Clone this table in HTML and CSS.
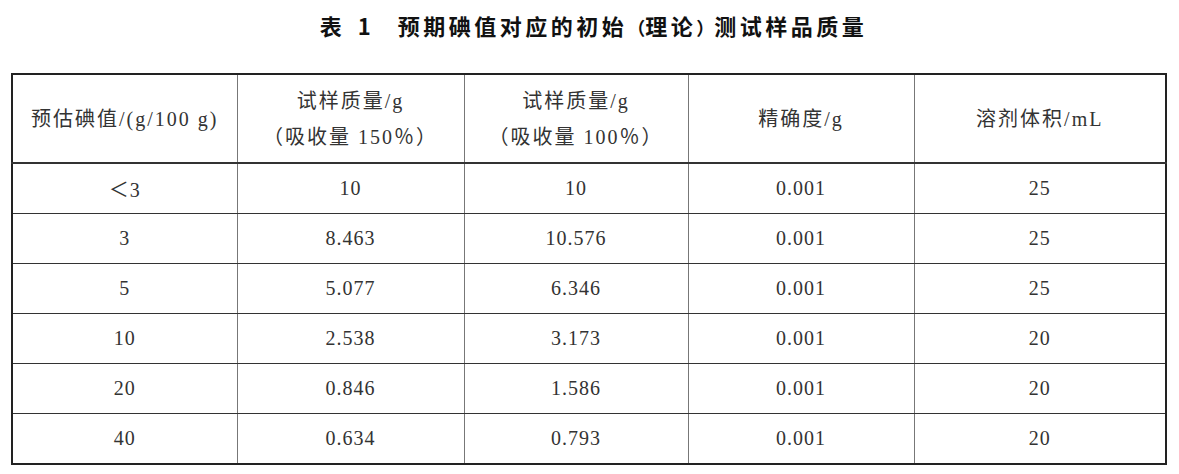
FILE: index.html
```html
<!DOCTYPE html>
<html lang="zh">
<head>
<meta charset="utf-8">
<link rel="stylesheet" href="styles.css">
</head>
<body>
<div class="page">
  <h1 class="title"><span class="tb">表</span><span class="tn">1</span><span class="tt">预期碘值对应的初始<span class="par">（</span>理论<span class="par">）</span>测试样品质量</span></h1>
  <table class="data">
    <colgroup>
      <col class="c1"><col class="c2"><col class="c3"><col class="c4"><col class="c5">
    </colgroup>
    <thead>
      <tr class="head">
        <th>预估碘值/(g/100 g)</th>
        <th>试样质量/g<br>（吸收量 150％）</th>
        <th>试样质量/g<br>（吸收量 100％）</th>
        <th>精确度/g</th>
        <th>溶剂体积/mL</th>
      </tr>
    </thead>
    <tbody>
      <tr><td>＜3</td><td>10</td><td>10</td><td>0.001</td><td>25</td></tr>
      <tr><td>3</td><td>8.463</td><td>10.576</td><td>0.001</td><td>25</td></tr>
      <tr><td>5</td><td>5.077</td><td>6.346</td><td>0.001</td><td>25</td></tr>
      <tr><td>10</td><td>2.538</td><td>3.173</td><td>0.001</td><td>20</td></tr>
      <tr><td>20</td><td>0.846</td><td>1.586</td><td>0.001</td><td>20</td></tr>
      <tr><td>40</td><td>0.634</td><td>0.793</td><td>0.001</td><td>20</td></tr>
    </tbody>
  </table>
</div>
</body>
</html>
```

FILE: styles.css
```css
html, body {
  margin: 0;
  padding: 0;
  background: #fff;
}
.page {
  padding: 10px 0 0 11px;
  width: 1157px;
}
.title {
  margin: 0;
  height: 63px;
  display: flex;
  justify-content: center;
  align-items: flex-start;
  font-family: "Noto Sans CJK SC", sans-serif;
  font-weight: 700;
  font-size: 22px;
  line-height: 30px;
  color: #111;
  padding-left: 8px;
}
.tb {
  margin-right: 16px;
}
.tn {
  margin-right: 27px;
}
.tt {
  letter-spacing: 3.5px;
}
.tt .par {
  font-size: 18px;
  letter-spacing: 0;
}
.data {
  width: 1156px;
  border-collapse: collapse;
  border: 2px solid #222;
  table-layout: fixed;
  font-family: "Liberation Serif", "Noto Sans CJK SC", serif;
  font-size: 20px;
  color: #333;
}
.c1 { width: 225px; }
.c2 { width: 227px; }
.c3 { width: 224px; }
.c4 { width: 226px; }
.c5 { width: 252px; }
.data th, .data td {
  text-align: center;
  vertical-align: middle;
  border-left: 1px solid #777;
  border-right: 1px solid #777;
  border-top: 1px solid #333;
  border-bottom: 1px solid #333;
  padding: 0;
  font-weight: 400;
}
.data th {
  height: 87px;
  line-height: 36px;
  letter-spacing: 2px;
  border-bottom: 2px solid #333;
}
.data td {
  height: 49px;
  letter-spacing: 1px;
}
```
